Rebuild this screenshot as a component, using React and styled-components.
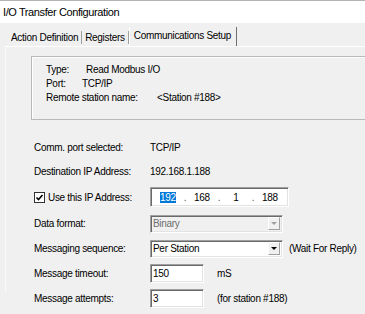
import React from "react";
import styled, { createGlobalStyle } from "styled-components";

const GlobalStyle = createGlobalStyle`
  body {
    margin: 0;
    background: #f0f0f0;
    font-family: "Liberation Sans", Arial, sans-serif;
    font-size: 10px;
    letter-spacing: -0.3px;
    color: #000;
  }
`;

const Window = styled.div`
  width: 365px;
  height: 314px;
  overflow: hidden;
  background: #f0f0f0;
`;

const TitleBar = styled.div`
  height: 22px;
  border-top: 1px solid #b4b4b4;
  background: #fff;
  display: flex;
  align-items: center;
  padding-left: 3px;
  font-size: 11px;
  letter-spacing: -0.4px;
`;

const TabStrip = styled.div`
  height: 23px;
  display: flex;
  align-items: flex-end;
  padding-left: 8px;
`;

const Tab = styled.div`
  height: ${(p) => (p.active ? 17 : 13)}px;
  margin-bottom: ${(p) => (p.active ? 0 : 2)}px;
  padding: 0 ${(p) => (p.active ? 5 : 3)}px 0 ${(p) => (p.active ? 4 : 3)}px;
  display: flex;
  align-items: center;
  border-right: 1px solid ${(p) => (p.active ? "#707070" : "#a0a0a0")};
  border-left: ${(p) => (p.active ? "1px solid #fff" : "none")};
  ${(p) => p.active && "padding-bottom: 2px;"}
`;

const Page = styled.div`
  margin-left: 5px;
  height: 245px;
  border-left: 1px solid #fafafa;
  border-top: 1px solid #fff;
`;

const GroupBox = styled.div`
  margin: 9px 0 0 25px;
  width: 400px;
  height: 64px;
  border: 1px solid #b9b9b9;
  box-shadow: inset 1px 1px 0 #fff;
  padding: 5px 0 0 14px;
  box-sizing: border-box;
`;

const InfoRow = styled.div`
  height: 14.4px;
  display: flex;
  align-items: center;
`;

const InfoLabel = styled.span`
  width: ${(p) => p.w}px;
`;

const Form = styled.div`
  margin-top: 15px;
  padding-left: 28px;
`;

const Row = styled.div`
  height: ${(p) => p.h || 25}px;
  display: flex;
  align-items: center;
`;

const Label = styled.div`
  width: 116px;
  flex: none;
  display: flex;
  align-items: center;
`;

const CheckBox = styled.span`
  width: 11px;
  height: 11px;
  box-sizing: border-box;
  border: 1px solid #333;
  background: #fff;
  margin-right: 3px;
  display: flex;
  align-items: center;
  justify-content: center;
`;

const Sunken = styled.div`
  box-sizing: border-box;
  border-top: 1px solid #a0a0a0;
  border-left: 1px solid #a0a0a0;
  border-right: 1px solid #fff;
  border-bottom: 1px solid #fff;
  box-shadow: inset 1px 1px 0 #696969, inset -1px -1px 0 #e3e3e3;
  background: ${(p) => (p.disabled ? "#f0f0f0" : "#fff")};
  color: ${(p) => (p.disabled ? "#6d6d6d" : "#000")};
  width: ${(p) => p.w}px;
  height: ${(p) => p.h}px;
  display: flex;
  align-items: center;
`;

const IpSeg = styled.span`
  width: 30px;
  text-align: center;
  flex: none;
`;

const IpDot = styled.span`
  width: 4px;
  text-align: center;
  flex: none;
  color: #555;
`;

const Selected = styled.span`
  background: #0078d7;
  color: #fff;
  padding: 0 0.5px;
`;

const ComboText = styled.span`
  flex: 1;
  padding-left: 2px;
`;

const DropButton = styled.span`
  width: 12px;
  height: 13px;
  margin-right: 2px;
  background: #f0f0f0;
  box-sizing: border-box;
  border-right: 1px solid #a0a0a0;
  border-bottom: 1px solid #a0a0a0;
  border-top: 1px solid #fff;
  border-left: 1px solid #fff;
  display: flex;
  align-items: center;
  justify-content: center;
`;

const Arrow = styled.span`
  width: 0;
  height: 0;
  border-left: 3px solid transparent;
  border-right: 3px solid transparent;
  border-top: 3px solid ${(p) => (p.disabled ? "#a0a0a0" : "#000")};
`;

const FieldText = styled.span`
  padding-left: 2px;
`;

const After = styled.span`
  margin-left: ${(p) => p.m}px;
`;

function Combo({ w, disabled, children }) {
  return (
    <Sunken w={w} h={18} disabled={disabled}>
      <ComboText>{children}</ComboText>
      <DropButton>
        <Arrow disabled={disabled} />
      </DropButton>
    </Sunken>
  );
}

export default function App() {
  return (
    <Window>
      <GlobalStyle />
      <TitleBar>I/O Transfer Configuration</TitleBar>
      <TabStrip>
        <Tab>Action Definition</Tab>
        <Tab>Registers</Tab>
        <Tab active>Communications Setup</Tab>
      </TabStrip>
      <Page>
        <GroupBox>
          <InfoRow>
            <InfoLabel w={40}>Type:</InfoLabel>
            <span>Read Modbus I/O</span>
          </InfoRow>
          <InfoRow>
            <InfoLabel w={36}>Port:</InfoLabel>
            <span>TCP/IP</span>
          </InfoRow>
          <InfoRow>
            <InfoLabel w={111}>Remote station name:</InfoLabel>
            <span>&lt;Station #188&gt;</span>
          </InfoRow>
        </GroupBox>
        <Form>
          <Row>
            <Label>Comm. port selected:</Label>
            <span>TCP/IP</span>
          </Row>
          <Row h={23}>
            <Label>Destination IP Address:</Label>
            <span>192.168.1.188</span>
          </Row>
          <Row h={28}>
            <Label>
              <CheckBox>
                <svg width="9" height="9" viewBox="0 0 9 9">
                  <path d="M1.5 4.5 L3.5 6.5 L7.5 2" fill="none" stroke="#000" strokeWidth="1.6" />
                </svg>
              </CheckBox>
              Use this IP Address:
            </Label>
            <Sunken w={139} h={20}>
              <span style={{ width: 2 }} />
              <IpSeg>
                <Selected>192</Selected>
              </IpSeg>
              <IpDot>.</IpDot>
              <IpSeg>168</IpSeg>
              <IpDot>.</IpDot>
              <IpSeg>1</IpSeg>
              <IpDot>.</IpDot>
              <IpSeg>188</IpSeg>
            </Sunken>
          </Row>
          <Row>
            <Label>Data format:</Label>
            <Combo w={133} disabled>
              Binary
            </Combo>
          </Row>
          <Row>
            <Label>Messaging sequence:</Label>
            <Combo w={133}>Per Station</Combo>
            <After m={6}>(Wait For Reply)</After>
          </Row>
          <Row>
            <Label>Message timeout:</Label>
            <Sunken w={54} h={19}>
              <FieldText>150</FieldText>
            </Sunken>
            <After m={13}>mS</After>
          </Row>
          <Row>
            <Label>Message attempts:</Label>
            <Sunken w={54} h={19}>
              <FieldText>3</FieldText>
            </Sunken>
            <After m={13}>(for station #188)</After>
          </Row>
        </Form>
      </Page>
    </Window>
  );
}
